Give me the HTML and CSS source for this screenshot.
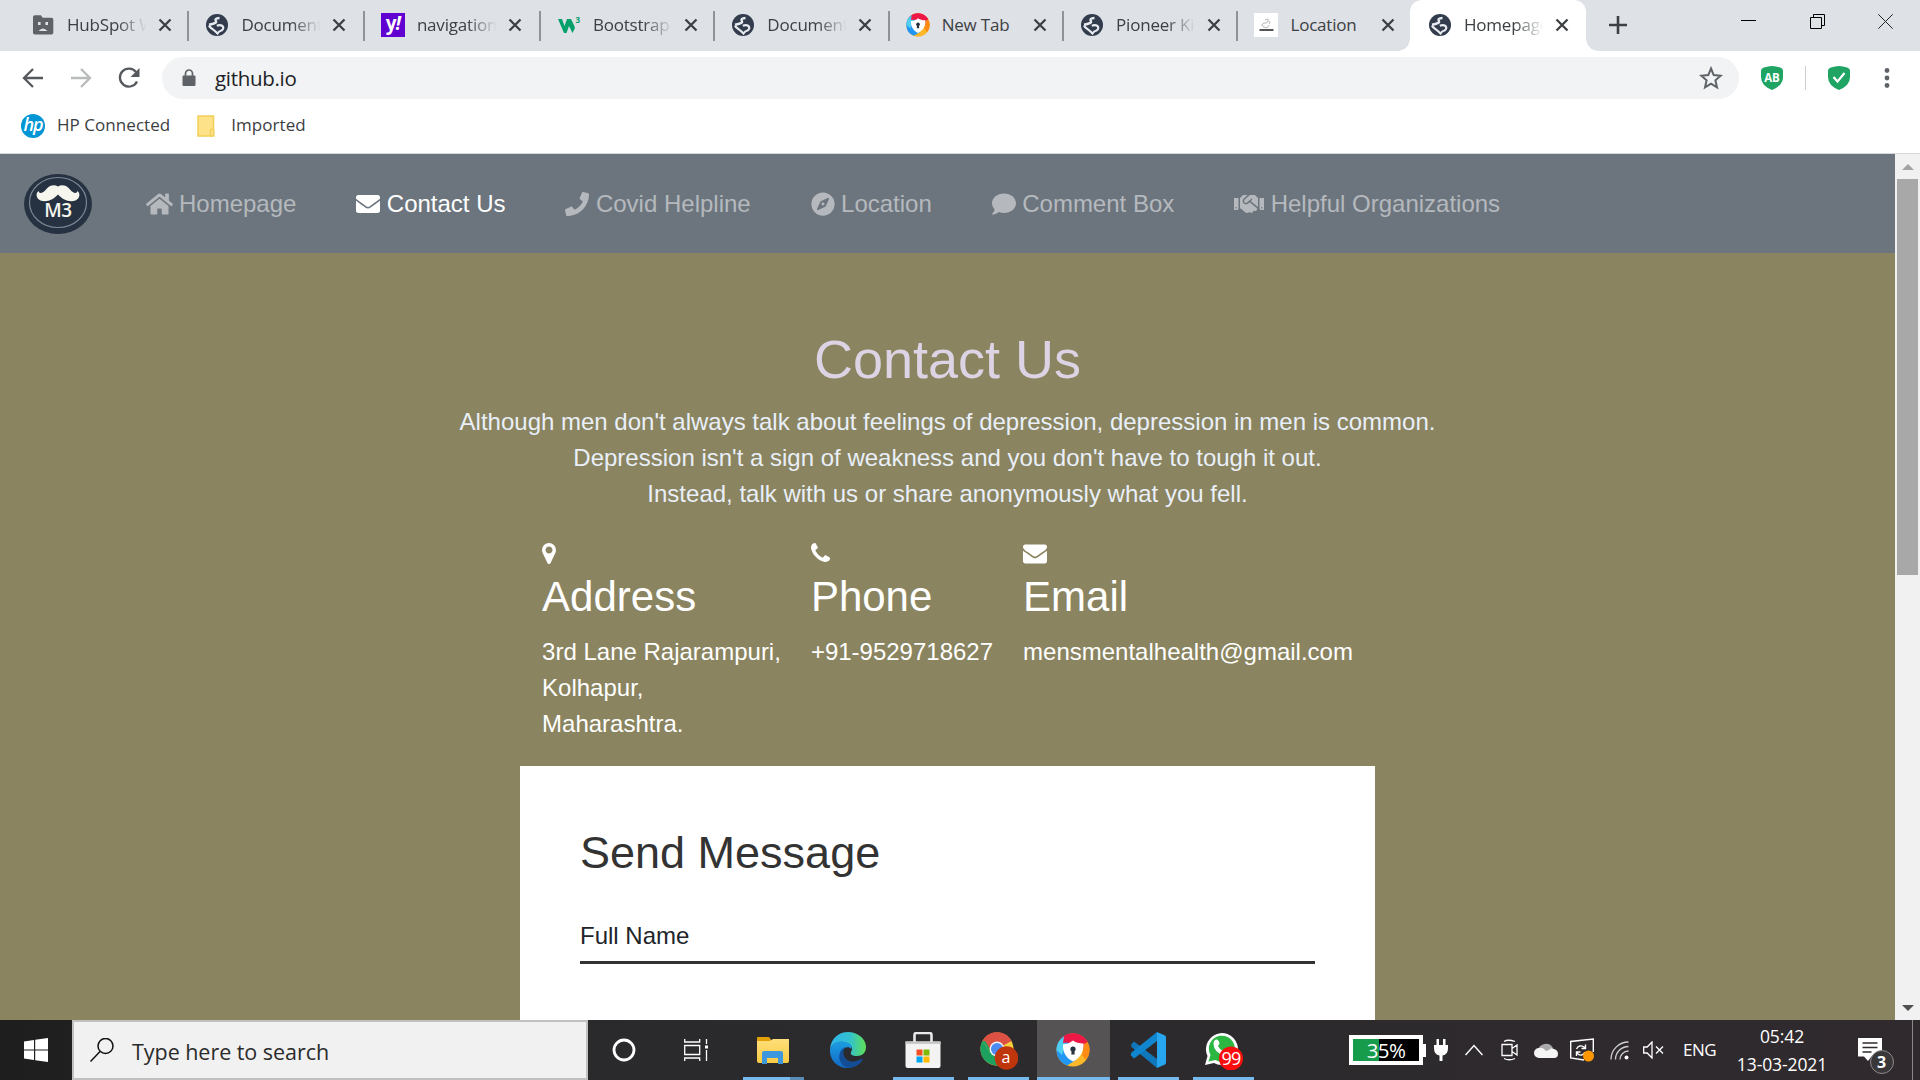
FILE: index.html
```html
<!DOCTYPE html>
<html lang="en">
<head>
<meta charset="utf-8">
<title>Homepage</title>
<link rel="stylesheet" href="styles.css">
</head>
<body>
<svg class="defs" width="0" height="0">
  <defs>
    <linearGradient id="edgeA" x1="0" y1="0" x2="1" y2="0"><stop offset="0" stop-color="#2fb4ee"/><stop offset=".55" stop-color="#33c1cf"/><stop offset="1" stop-color="#5fe055"/></linearGradient>
    <linearGradient id="edgeB" x1="0" y1="0" x2="0" y2="1"><stop offset="0" stop-color="#1b9de2"/><stop offset="1" stop-color="#1268c4"/></linearGradient>
    <linearGradient id="folder" x1="0" y1="0" x2="0" y2="1"><stop offset="0" stop-color="#ffdf7a"/><stop offset="1" stop-color="#f9cb45"/></linearGradient>
    <symbol id="close" viewBox="0 0 14 14"><path d="M1.500 1.500 12.500 12.500M12.500 1.500 1.500 12.500" stroke="#3c4043" stroke-width="2.300" fill="none"/></symbol>
    <symbol id="globe" viewBox="0 0 24 24"><circle cx="12" cy="12" r="11" fill="#323c4d"/><path d="M14.500 5C10.500 5 9.800 6.800 11 8.300 11.800 9.600 9 10.800 4 11.800" fill="none" stroke="#e8ecf1" stroke-width="2.400"/><path d="M4 12.500C5 15 8 16 10.500 18.500L12.500 20.500Q14 18 16.500 17.500 19.500 15.500 17.500 13 15 11.500 11.800 12.800" fill="none" stroke="#e8ecf1" stroke-width="2.200"/></symbol>
    <symbol id="avast" viewBox="0 0 34 34"><circle cx="17" cy="17" r="16.500" fill="#fdb829"/><path d="M17 17 3 8A16.500 16.500 0 0 1 31.500 9L28 16Z" fill="#ed1846"/><path d="M17 17 8 3.200A16.500 16.500 0 0 0 11 32.400L20 27Z" fill="#2196f3"/><path d="M8 3.500A16.500 16.500 0 0 0 .6 17L6 22 10 10Z" fill="#4fd0f2"/><path d="M8 3.500A16.500 16.500 0 0 1 31.500 9L29 13 17 9 7 10Z" fill="#ed1846"/><path d="M31.500 9A16.500 16.500 0 0 1 30 27L26 22 28 11Z" fill="#ff8a14"/><path d="M17 7.500C20 9.800 23 10.200 27.500 10.400 28 19 24 25 17 28.500 10 25 6.500 19 7 11.500 11 11 14 10 17 7.500Z" fill="#fff"/><circle cx="17" cy="16" r="2.600" fill="#26323e"/><path d="M15.800 16h2.400l.5 5.500h-3.400z" fill="#26323e"/></symbol>
  </defs>
</svg>

<header class="browser">
  <div class="tabstrip">
    <div class="tab"><svg class="fav" viewBox="0 0 24 24"><path d="M2 4q0-1.800 1.800-1.800h6l2 2.500h8.700q1.800 0 1.800 1.800v13.200q0 1.800-1.800 1.800H3.800Q2 21.500 2 19.700z" fill="#5f6368"/><path d="M7 9h2.600v3H7zM14.400 9H17v3h-2.600zM7.500 18q4.500-5 9 0" fill="#dee1e6"/></svg><span class="title">HubSpot W</span><svg class="x"><use href="#close"/></svg></div>
    <div class="tab t2"><svg class="fav"><use href="#globe"/></svg><span class="title">Document</span><svg class="x"><use href="#close"/></svg></div>
    <div class="tab t3"><span class="fav yahoo">y<i>!</i></span><span class="title">navigation</span><svg class="x"><use href="#close"/></svg></div>
    <div class="tab"><svg class="fav" viewBox="0 0 24 24"><path d="M1 6h4l2.500 7L10 6h4l3 6 1 3-2.500 5L12 13l-2.500 7H7z" fill="#04a06a"/><text class="w3sup" x="18.500" y="9.500">3</text></svg><span class="title">Bootstrap</span><svg class="x"><use href="#close"/></svg></div>
    <div class="tab"><svg class="fav"><use href="#globe"/></svg><span class="title">Document</span><svg class="x"><use href="#close"/></svg></div>
    <div class="tab"><svg class="fav"><use href="#avast"/></svg><span class="title full">New Tab</span><svg class="x"><use href="#close"/></svg></div>
    <div class="tab"><svg class="fav"><use href="#globe"/></svg><span class="title">Pioneer Ki</span><svg class="x"><use href="#close"/></svg></div>
    <div class="tab t8"><svg class="fav" viewBox="0 0 24 24"><path d="M0 0h24v24H0z" fill="#fff"/><path d="M11 7q4-2 3 1t-4 2q-4 2 0 4t5-2M15 8q2 2 0 3" fill="none" stroke="#aaa" stroke-width=".9"/><path d="M5.500 17h14" stroke="#555" stroke-width="2"/></svg><span class="title full">Location</span><svg class="x"><use href="#close"/></svg></div>
    <div class="tab active"><svg class="fav"><use href="#globe"/></svg><span class="title">Homepage</span><svg class="x"><use href="#close"/></svg></div>
    <svg class="plus" viewBox="0 0 18 18"><path d="M9 0v18M0 9h18" stroke="#3c4043" stroke-width="2.600"/></svg>
    <div class="winctl">
      <svg viewBox="0 0 15 15"><path d="M0 6.500h15" stroke="#000"/></svg>
      <svg viewBox="0 0 15 15"><path d="M.5 3.500h11v11H.5zM3.500 3.500v-3h11v11h-3" fill="none" stroke="#000"/></svg>
      <svg viewBox="0 0 15 15"><path d="M.3.300l14.400 14.400M14.700.300.300 14.700" stroke="#222"/></svg>
    </div>
  </div>
  <div class="toolbar">
    <svg class="tb" viewBox="0 0 24 24"><path d="M22 12H3.500M12 3l-9 9 9 9" fill="none" stroke="#55595e" stroke-width="2.300"/></svg>
    <svg class="tb" viewBox="0 0 24 24"><path d="M2 12h18.500M12 3l9 9-9 9" fill="none" stroke="#b9babc" stroke-width="2.300"/></svg>
    <svg class="tb" viewBox="0 0 24 24"><path d="M20 15.500A9 9 0 1 1 19 6" fill="none" stroke="#55595e" stroke-width="2.300"/><path d="M22.500 2v9h-9z" fill="#55595e"/></svg>
    <div class="omnibox">
      <svg class="lock" viewBox="0 0 14 18"><path d="M1.500 6.500h11q1 0 1 1v8.500q0 1-1 1h-11q-1 0-1-1V7.500q0-1 1-1z" fill="#5f6368"/><path d="M3.500 7V4.500a3.500 3.500 0 0 1 7 0V7" fill="none" stroke="#5f6368" stroke-width="1.700"/></svg>
      <span class="url">github.io</span>
      <svg class="star" viewBox="0 0 24 24"><path d="M12 2.500l2.700 6.600 7 .6-5.300 4.600 1.600 7L12 17.600l-6 3.700 1.600-7L2.300 9.700l7-.6z" fill="none" stroke="#5f6368" stroke-width="2"/></svg>
    </div>
    <svg class="shield" viewBox="0 0 22 24"><path d="M3 1.500Q11-1.500 19 1.500q3 1 3 3.500V11q0 8.500-11 13Q0 19.500 0 11V5q0-2.500 3-3.500z" fill="#1fa463"/><text class="ab" x="11" y="15.500">AB</text></svg>
    <span class="tbsep"></span>
    <svg class="shield" viewBox="0 0 22 24"><path d="M3 1.500Q11-1.500 19 1.500q3 1 3 3.500V11q0 8.500-11 13Q0 19.500 0 11V5q0-2.500 3-3.500z" fill="#1fa463"/><path d="M5.500 11l4 4.500L16.500 7" fill="none" stroke="#fff" stroke-width="2.200"/></svg>
    <svg class="dots" viewBox="0 0 6 20"><circle cx="3" cy="2.500" r="2.400"/><circle cx="3" cy="10" r="2.400"/><circle cx="3" cy="17.500" r="2.400"/></svg>
  </div>
  <div class="bookmarks">
    <span class="hp">hp</span><span>HP Connected</span>
    <svg class="fold" viewBox="0 0 18 22"><path d="M1 1h15.500v14.500H14V21H1z" fill="#fee28a" stroke="#f2cf57" stroke-width="1.500"/><path d="M13.500 21v-5q0-2 1.700-2t1.800 2v5z" fill="#fee28a" stroke="#f2cf57" stroke-width="1.300"/></svg><span>Imported</span>
  </div>
</header>

<div class="viewport">
  <main class="page">
    <nav class="navbar">
      <svg class="logo" viewBox="0 0 68 60" preserveAspectRatio="none"><ellipse cx="34" cy="30" rx="34" ry="30" fill="#263241"/><ellipse cx="34" cy="28.500" rx="28.500" ry="25" fill="none" stroke="#7c8793" stroke-width="1.200"/><path d="M34 12.500C38 10 43 11.500 46 15.500 49 19.500 53 20 53.500 17 56.500 19 56 24.500 51.500 26.500 45 29 38 25 34 20.500 30 25 23 29 16.500 26.500 12 24.500 11.500 19 14.500 17 15 20 19 19.500 22 15.500 25 11.500 30 10 34 12.500Z" fill="#f6f5ee"/><text class="m3" x="34" y="42.500">M3</text></svg>
      <a class="link"><svg class="i-home" viewBox="0 0 576 512"><path d="M280.370 148.260L96 300.110V464a16 16 0 0 0 16 16l112.060-.29a16 16 0 0 0 15.920-16V368a16 16 0 0 1 16-16h64a16 16 0 0 1 16 16v95.640a16 16 0 0 0 16 16.050L464 480a16 16 0 0 0 16-16V300L295.670 148.260a12.190 12.190 0 0 0-15.300 0zM571.600 251.470L488 182.560V44.050a12 12 0 0 0-12-12h-56a12 12 0 0 0-12 12v72.610L318.470 43a48 48 0 0 0-61 0L4.340 251.470a12 12 0 0 0-1.600 16.900l25.500 31A12 12 0 0 0 45.150 301l235.220-193.740a12.190 12.190 0 0 1 15.300 0L530.900 301a12 12 0 0 0 16.900-1.600l25.500-31a12 12 0 0 0-1.700-16.930z"/></svg>Homepage</a>
      <a class="link current"><svg class="i-sq" viewBox="0 0 512 512"><path d="M502.300 190.800c3.900-3.100 9.700-.2 9.700 4.700V400c0 26.500-21.500 48-48 48H48c-26.500 0-48-21.500-48-48V195.600c0-5 5.700-7.800 9.700-4.700 22.400 17.400 52.100 39.500 154.100 113.600 21.100 15.400 56.700 47.800 92.200 47.600 35.700.3 72-32.800 92.300-47.600 102-74.100 131.600-96.300 154-113.700zM256 320c23.200.4 56.600-29.200 73.400-41.400 132.700-96.300 142.800-104.700 173.400-128.700 5.800-4.500 9.200-11.500 9.200-18.900v-19c0-26.500-21.500-48-48-48H48c-26.500 0-48 21.500-48 48v19c0 7.400 3.400 14.300 9.200 18.900 30.600 23.900 40.700 32.400 173.400 128.700 16.800 12.200 50.200 41.800 73.400 41.400z"/></svg>Contact Us</a>
      <a class="link"><svg class="i-sq" viewBox="0 0 512 512"><path d="M493.400 24.600l-104-24c-11.300-2.600-22.900 3.300-27.500 13.900l-48 112c-4.200 9.800-1.400 21.300 6.900 28l60.600 49.600c-36 76.700-98.900 140.500-177.200 177.200l-49.600-60.600c-6.800-8.300-18.200-11.100-28-6.900l-112 48C3.900 366.500-2 378.100.6 389.400l24 104C27.100 504.200 36.700 512 48 512c256.100 0 464-207.500 464-464 0-11.200-7.700-20.900-18.600-23.400z"/></svg>Covid Helpline</a>
      <a class="link"><svg class="i-sq" viewBox="0 0 496 512"><path d="M225.380 233.370c-12.500 12.500-12.500 32.760 0 45.250 12.490 12.500 32.760 12.500 45.250 0 12.500-12.500 12.500-32.760 0-45.250-12.500-12.490-32.760-12.490-45.250 0zM248 8C111.030 8 0 119.030 0 256s111.030 248 248 248 248-111.030 248-248S384.970 8 248 8zm126.140 148.050L308.170 300.400a31.938 31.938 0 0 1-15.770 15.770l-144.340 65.970c-16.650 7.610-33.810-9.550-26.200-26.200l65.980-144.350a31.938 31.938 0 0 1 15.770-15.770l144.340-65.970c16.650-7.600 33.800 9.550 26.190 26.200z"/></svg>Location</a>
      <a class="link"><svg class="i-sq" viewBox="0 0 512 512"><path d="M256 32C114.600 32 0 125.100 0 240c0 49.600 21.400 95 57 130.700C44.500 421.100 2.700 466 2.200 466.500c-2.200 2.300-2.800 5.700-1.500 8.700S4.800 480 8 480c66.300 0 116-31.800 140.600-51.400 32.700 12.300 69 19.400 107.400 19.400 141.400 0 256-93.100 256-208S397.400 32 256 32z"/></svg>Comment Box</a>
      <a class="link"><svg class="i-hands" viewBox="0 0 640 512"><path d="M434.700 64h-85.900c-8 0-15.700 3-21.600 8.400l-98.300 90c-.1.1-.2.300-.3.400-16.600 15.600-16.300 40.500-2.100 56 12.700 13.900 39.400 17.600 56.100 2.700.1-.1.300-.1.400-.2l79.900-73.200c6.500-5.900 16.700-5.500 22.600 1 6 6.500 5.500 16.600-1 22.600l-26.100 23.900L504 313.800c2.900 2.400 5.500 5 7.900 7.700V128l-54.600-54.600c-5.900-6-14.100-9.400-22.600-9.400zM544 128.200v223.900c0 17.700 14.300 32 32 32h64V128.200h-96zm48 223.900c-8.800 0-16-7.200-16-16s7.200-16 16-16 16 7.200 16 16-7.200 16-16 16zM0 384h64c17.700 0 32-14.300 32-32V128.200H0V384zm48-63.900c8.800 0 16 7.200 16 16s-7.200 16-16 16-16-7.200-16-16c0-8.900 7.200-16 16-16zm435.900 18.600L334.600 217.500l-30 27.500c-29.700 27.100-75.200 24.500-101.700-4.400-26.900-29.400-24.800-74.900 4.400-101.700L289.100 64h-83.800c-8.500 0-16.600 3.400-22.600 9.400L128 128v223.900h18.300l90.500 81.900c27.400 22.300 67.700 18.100 90-9.300l.2-.2 17.900 15.500c15.900 13 39.400 10.500 52.300-5.400l31.400-38.600 5.400 4.400c13.700 11.100 33.900 9.100 45-4.700l9.500-11.700c11.200-13.800 9.100-33.900-4.600-45.100z"/></svg>Helpful Organizations</a>
    </nav>
    <section class="contact">
      <h2>Contact Us</h2>
      <p class="intro">Although men don't always talk about feelings of depression, depression in men is common.<br>Depression isn't a sign of weakness and you don't have to tough it out.<br>Instead, talk with us or share anonymously what you fell.</p>
      <div class="info">
        <div class="col">
          <svg class="c-pin" viewBox="384 128 1024 1536"><path d="M1152 640q0-106-75-181t-181-75-181 75-75 181 75 181 181 75 181-75 75-181zm256 0q0 109-33 179l-364 774q-16 33-47.500 52t-67.500 19-67.500-19-46.500-52l-365-774q-33-70-33-179 0-212 150-362t362-150 362 150 150 362z"/></svg>
          <h3>Address</h3>
          <p>3rd Lane Rajarampuri,<br>Kolhapur,<br>Maharashtra.</p>
        </div>
        <div class="col">
          <svg class="c-phone" viewBox="192 128 1408 1408"><path d="M1600 1240q0 27-10 70.500t-21 68.500q-21 50-122 106-94 51-186 51-27 0-53-3.500t-57.500-12.500-47-14.500-55.500-20.500-49-18q-98-35-175-83-127-79-264-216t-216-264q-48-77-83-175-3-9-18-49t-20.500-55.500-14.500-47-12.500-57.500-3.500-53q0-92 51-186 56-101 106-122 25-11 68.500-21t70.500-10q14 0 21 3 18 6 53 76 11 19 30 54t35 63.500 31 53.500q3 4 17.500 25t21.500 35.500 7 28.500q0 20-28.500 50t-62 55-62 53-28.500 46q0 9 5 22.500t8.500 20.500 14 24 11.500 19q76 137 174 235t235 174q2 1 19 11.500t24 14 20.500 8.500 22.500 5q18 0 46-28.500t53-62 55-62 50-28.500q14 0 28.500 7t35.500 21.500 25 17.500q25 15 53.500 31t63.500 35 54 30q70 35 76 53 3 7 3 21z"/></svg>
          <h3>Phone</h3>
          <p>+91-9529718627</p>
        </div>
        <div class="col">
          <svg class="c-mail" viewBox="0 256 1792 1408"><path d="M1792 710v794q0 66-47 113t-113 47h-1472q-66 0-113-47t-47-113v-794q44 49 101 87 362 246 497 345 57 42 92.500 65.500t94.500 48 110 24.500h2q51 0 110-24.500t94.500-48 92.500-65.500q170-123 498-345 57-39 100-87zm0-294q0 79-49 151t-122 123q-376 261-468 325-10 7-42.500 31t-54 38.500-52 32.500-57.500 27-50 9h-2q-23 0-50-9t-57.500-27-52-32.500-54-38.500-42.500-31q-91-64-262-182.500t-205-142.500q-62-42-117-115.500t-55-136.500q0-78 41.500-130t118.500-52h1472q65 0 112.500 47t47.500 113z"/></svg>
          <h3>Email</h3>
          <p>mensmentalhealth@gmail.com</p>
        </div>
      </div>
      <form class="card">
        <h2>Send Message</h2>
        <div class="field">Full Name</div>
      </form>
    </section>
  </main>
  <div class="scrollbar">
    <svg viewBox="0 0 12 6"><path d="M0 6l6-6 6 6z" fill="#a3a3a3"/></svg>
    <div class="thumb"></div>
    <svg class="down" viewBox="0 0 12 6"><path d="M0 0l6 6 6-6z" fill="#505050"/></svg>
  </div>
</div>

<footer class="taskbar">
  <div class="start"><svg viewBox="0 0 24 24"><path d="M0 3.400l10-1.400v9.400H0zM11.200 1.800 24 0v11.400H11.200zM0 12.600h10V22L0 20.600zM11.200 12.600H24V24l-12.800-1.800z" fill="#fff"/></svg></div>
  <div class="search"><svg viewBox="0 0 24 24"><circle cx="15.500" cy="8" r="7.500" fill="none" stroke="#111" stroke-width="1.500"/><path d="M10 13.500.5 23.500" stroke="#111" stroke-width="1.500"/></svg><span>Type here to search</span></div>
  <div class="sys"><svg viewBox="0 0 24 24"><circle cx="12" cy="12" r="10" fill="none" stroke="#fff" stroke-width="2.800"/></svg></div>
  <div class="sys"><svg viewBox="0 0 24 24"><path d="M.7 1v3h15V1M.7 23v-3h15v3M.7 7.500h15v9H.7zM22.500 1v5M22.500 12v11" fill="none" stroke="#fff" stroke-width="1.300"/><path d="M21 7.500h3v3h-3z" fill="#fff"/></svg></div>
  <div class="apps">
    <div class="app open split"><svg viewBox="0 0 36 36"><path d="M2 6q0-1 1-1h11l3 4H2z" fill="#e3a008"/><path d="M2 9h13l3-2h16v22q0 2-2 2H4q-2 0-2-2z" fill="url(#folder)"/><path d="M7 32V21q0-2 2-2h17q2 0 2 2v11h-5v-6H12v6z" fill="#3d97dc"/></svg></div>
    <div class="app"><svg viewBox="0 0 36 36"><path d="M0 17C1 6 9 0 18 0c10 0 18 7 18 15 0 6-4 9-9 9-4 0-7-1-6-4 2-3 1-6-2-8C13 8 4 9 0 17Z" fill="url(#edgeA)"/><path d="M0 17C3 9 13 8 18 11c4 2 4 4 3 6-2-3-8-2-9 4-1 7 5 14 10 15C9 38-1 29 0 17Z" fill="url(#edgeB)"/><path d="M15 15c-5 9 3 17 11 14 3 0 6-3 7-2-3 6-9 9-15 9C8 33 6 20 15 15Z" fill="#134d96"/></svg></div>
    <div class="app open"><svg viewBox="0 0 36 36"><path d="M9.500 12V3q0-2 2-2h13q2 0 2 2v9" fill="none" stroke="#e8e8e8" stroke-width="2.600"/><path d="M.5 9.500h35V34q0 2-2 2h-31q-2 0-2-2z" fill="#f3f3f3"/><path d="M.5 9.500h35V12H.5z" fill="#c9c9c9"/><path d="M11.500 17.500h6v6h-6z" fill="#f25022"/><path d="M18.500 17.500h6v6h-6z" fill="#7fba00"/><path d="M11.500 24.500h6v6h-6z" fill="#00a4ef"/><path d="M18.500 24.500h6v6h-6z" fill="#ffb900"/></svg></div>
    <div class="app open"><svg class="wide" viewBox="0 0 38 38"><circle cx="17" cy="17" r="16.500" fill="#f7cf3f"/><path d="M17 17 2.500 9A16.500 16.500 0 0 1 31.500 9Z" fill="#dd5144"/><path d="M2.500 9A16.500 16.500 0 0 0 17 33.500L22 22 10 20Z" fill="#1da15f"/><path d="M2.500 9 12 9 10 20Z" fill="#1da15f"/><path d="M4 7A16.500 16.500 0 0 1 31.500 9H17L10 17Z" fill="#dd5144"/><circle cx="17" cy="17" r="7.500" fill="#f1f1f1"/><circle cx="17" cy="17" r="6" fill="#4c8bf5"/><circle cx="26.500" cy="26" r="11.800" fill="#bf360c"/><text class="badge-a" x="26" y="31">a</text></svg></div>
    <div class="app open now"><svg class="av" viewBox="0 0 34 34"><use href="#avast"/></svg></div>
    <div class="app open"><svg viewBox="0 0 36 36"><path d="M1 12.500 4 9.500 27 27V36L1.500 15z" fill="#1177bb"/><path d="M1 23.500 4 26.500 27 9V0L1.500 20.500q-1 1.500-.5 3z" fill="#0f86cf"/><path d="M27 0l8 3.500q1 .5 1 2v25q0 1.500-1 2L27 36z" fill="#27a5ee"/></svg></div>
    <div class="app open"><svg class="wide" viewBox="0 0 38 38"><path d="M0 33l2.500-9A16 16 0 1 1 9 31z" fill="#fff"/><path d="M3.500 29.500l2-6.500A13 13 0 1 1 10.500 28z" fill="#2bb741"/><path d="M10 8q3-2 4.500 3 0 1-1.500 3 2 4 6.500 5.500l2-2q4 1 4 3-2 4-7 3Q9 20 8.500 12q0-3 1.500-4z" fill="#fff"/><circle cx="26" cy="26.500" r="12" fill="#f90d0d"/><text class="badge-n" x="26" y="32.500">99</text></svg></div>
  </div>
  <div class="tray">
    <div class="battery"><span>35%</span></div>
    <svg class="t-plug" viewBox="0 0 14 22"><path d="M2.500 0H5v6h4V0h2.500v6H14v3q0 7-5.500 7.500V22h-3v-5.500Q0 16 0 9V6h2.500z" fill="#fff"/></svg>
    <svg class="t-chev" viewBox="0 0 18 12"><path d="M.5 11 9 1.500l8.500 9.500" fill="none" stroke="#fff" stroke-width="1.500"/></svg>
    <svg class="t-cam" viewBox="0 0 18 22"><path d="M3 2.500Q7 0 14 2.500M3 19.500q5 2.500 11 0M1 5.500h10v11H1zM11 9.500l5-3.500v10l-5-3.500" fill="none" stroke="#fff" stroke-width="1.300"/></svg>
    <svg class="t-cloud" viewBox="0 0 24 16"><path d="M4 9a8 8 0 0 1 15-3l-4 4z" fill="#aaa"/><path d="M5 16a5 5 0 0 1 0-10q4-1 7 3l3-1q2-3 5-1 4 1 4 5 0 4-4 4z" fill="#f4f4f4"/></svg>
    <svg class="t-upd" viewBox="0 0 24 24"><path d="M14 22 .7 20V3.500L23.300 1v13" fill="none" stroke="#fff" stroke-width="1.400"/><path d="M6.500 11Q9 6 14 9l1.500 1.500M15.500 6.500v4h-4M15 14Q12 19 8 16l-1.500-2M6.500 18v-4h4" fill="none" stroke="#fff" stroke-width="1.400"/><circle cx="18.500" cy="18" r="5.500" fill="#ff9800"/></svg>
    <svg class="t-wifi" viewBox="0 0 20 19"><path d="M1 18.500A17.500 17.500 0 0 1 18.500 1M5.500 18.500a13 13 0 0 1 13-13M10 18.500a8.500 8.500 0 0 1 8.500-8.500" fill="none" stroke="#d0d0d0" stroke-width="1.300"/><circle cx="16.500" cy="16.500" r="2" fill="#fff"/></svg>
    <svg class="t-vol" viewBox="0 0 21 18"><path d="M.7 6h3.500L9 1v16l-4.800-5H.7zM13 5.500l7 7M20 5.500l-7 7" fill="none" stroke="#fff" stroke-width="1.300"/></svg>
    <span class="lang">ENG</span>
    <div class="clock"><span>05:42</span><span>13-03-2021</span></div>
    <svg class="t-note" viewBox="0 0 36 36"><path d="M0 0h24v18.500H13.500L10 23l-4-4.500H0z" fill="#fff"/><path d="M4.500 5h15M4.500 9.500h15M4.500 14h9" stroke="#2f2b2e" stroke-width="1.300"/><circle cx="24" cy="24" r="11.500" fill="#3a3739" stroke="#8c8a8b"/><text class="cnt" x="23.500" y="29.500">3</text></svg>
    <span class="desk"></span>
  </div>
</footer>
</body>
</html>
```
FILE: styles.css
```css
* { box-sizing: border-box; }
html, body { margin: 0; height: 100%; overflow: hidden; }
body { width: 1920px; height: 1080px; display: flex; flex-direction: column; font-family: "Liberation Sans", Arial, sans-serif; }
svg { display: block; flex: none; }
.defs { position: absolute; }

/* browser chrome */
.browser { height: 154px; flex: none; display: flex; flex-direction: column; background: #fff; border-bottom: 1px solid #d6d8db; font-family: "Open Sans", "Noto Sans", sans-serif; color: #3c4043; }
.tabstrip { height: 51px; display: flex; align-items: center; padding-left: 15px; background: #dee1e6; }
.tab { width: 174.400px; height: 30px; flex: none; display: flex; align-items: center; padding-left: 16px; border-right: 2px solid #8f9297; margin-bottom: 0; }
.tab.t2 { width: 175.500px; }
.tab.t3 { width: 176px; }
.tab.t8 { width: 171.500px; border-color: transparent; }
.fav { width: 24px; height: 24px; margin-right: 12px; margin-top: -1px; }
.title { width: 81px; font-size: 17px; letter-spacing: -.2px; line-height: 30px; margin-top: -2px; white-space: nowrap; overflow: hidden; -webkit-mask-image: linear-gradient(90deg, #000 62%, transparent 98%); mask-image: linear-gradient(90deg, #000 62%, transparent 98%); }
.title.full { -webkit-mask-image: none; mask-image: none; }
.x { width: 14px; height: 14px; margin-left: 10px; margin-top: -1px; }
.tab.active { width: 176px; height: 51px; margin: 0; border: 0; background: #fff; border-radius: 12px 12px 0 0; position: relative; padding-left: 18px; }
.tab.active::before, .tab.active::after { content: ""; position: absolute; bottom: 0; width: 12px; height: 12px; }
.tab.active::before { left: -12px; background: radial-gradient(circle at 0 0, #dee1e6 11.500px, #fff 12px); }
.tab.active::after { right: -12px; background: radial-gradient(circle at 100% 0, #dee1e6 11.500px, #fff 12px); }
.yahoo { background: #6001d2; color: #fff; font: bold 19px/21px "Open Sans", sans-serif; text-align: center; letter-spacing: -1px; }
.w3sup { font: bold 8px "Open Sans", sans-serif; fill: #04a06a; }
.plus { width: 18px; height: 18px; margin-left: 23px; margin-top: -1px; }
.winctl { display: flex; gap: 53.500px; margin-left: auto; padding-right: 27px; margin-top: -8px; }
.winctl svg { width: 15px; height: 15px; }
.toolbar { height: 53px; display: flex; align-items: center; padding-left: 21px; }
.tb { width: 24px; height: 24px; margin-right: 24px; }
.tb + .tb + .tb { margin-right: 21px; }
.omnibox { width: 1577px; height: 42px; border-radius: 21px; background: #f1f3f4; display: flex; align-items: center; padding-left: 20px; }
.lock { width: 14px; height: 18px; }
.url { margin-left: 19px; font-size: 20.500px; color: #202124; line-height: 38px; letter-spacing: -.3px; }
.star { width: 24px; height: 24px; margin-left: auto; margin-right: 16px; }
.shield { width: 22px; height: 24px; margin-left: 22px; }
.ab { font: bold 11.500px "Open Sans", sans-serif; fill: #fff; text-anchor: middle; }
.tbsep { width: 1px; height: 24px; margin-left: 22px; background: #ccced1; }
.dots { width: 6px; height: 20px; margin-left: 34px; fill: #5f6368; }
.bookmarks { display: flex; align-items: center; height: 44px; padding-left: 21px; font-size: 17px; line-height: 24px; letter-spacing: .05px; }
.bookmarks span:not(.hp) { margin-top: -2px; }
.hp { width: 24px; height: 24px; margin-right: 12px; border-radius: 50%; background: #0096d6; color: #fff; font: italic 600 18px/20px "Open Sans", sans-serif; text-align: center; letter-spacing: -1px; }
.fold { width: 18px; height: 22px; margin: 0 16px 0 27px; }

/* web page */
.viewport { height: 866px; flex: none; display: flex; overflow: hidden; }
.page { width: 1895px; background: #8a8460; overflow: hidden; }
.navbar { height: 99px; display: flex; align-items: center; padding-left: 24px; background: #6c757d; font-size: 24px; line-height: 36px; }
.logo { width: 68px; height: 60px; margin-right: 53.500px; margin-top: 1px; }
.m3 { font: 600 19px "Open Sans", sans-serif; fill: #f6f5ee; text-anchor: middle; letter-spacing: -.5px; }
.link { display: flex; align-items: center; white-space: nowrap; margin-right: 59.900px; color: #b5b9bd; }
.link svg { fill: currentColor; height: 24px; margin-right: 6.500px; }
.link.current { color: #fff; }
.i-home { width: 27px; }
.i-sq { width: 24px; }
.i-hands { width: 30px; }
.contact { padding-top: 74px; text-align: center; }
h2, h3, p { margin: 0; font-weight: 400; }
.contact > h2 { font-size: 54px; line-height: 65px; color: #dcd3e4; }
.intro { margin: 12px 0 24px; font-size: 24px; line-height: 36px; color: #e9eff8; }
.info { display: flex; justify-content: center; gap: 30px; color: #fff; text-align: left; font-size: 24px; line-height: 36px; height: 206px; }
.col { display: flex; flex-direction: column; white-space: nowrap; }
.col svg { fill: #fff; margin: 7px 0 8px; height: 21px; }
.col .c-phone { height: 19px; margin-bottom: 10px; width: 19px; }
.col .c-mail { height: 20px; margin: 8px 0; width: 24px; }
.c-pin { width: 14px; }
h3 { font-size: 42px; line-height: 50px; margin-bottom: 12px; }
.card { width: 855px; height: 400px; margin: 24px auto 0; padding: 60px; background: #fff; text-align: left; }
.card h2 { font-size: 45px; line-height: 54px; color: #333; }
.field { margin-top: 38px; height: 46px; border-bottom: 3px solid #333; font-size: 24px; line-height: 36px; color: #212529; }
.scrollbar { width: 25px; background: #f1f1f1; display: flex; flex-direction: column; align-items: center; padding: 10px 0 9px; }
.scrollbar svg { width: 12px; height: 6px; }
.thumb { width: 21px; height: 396px; margin-top: 9px; background: #a8a8a8; }
.scrollbar .down { margin-top: auto; }

/* taskbar */
.taskbar { height: 60px; flex: none; display: flex; background: linear-gradient(90deg, #1e1e1e, #2a2a2c 31%, #2c2a2c 60%, #302a2e); font-family: "Open Sans", "Noto Sans", sans-serif; color: #fff; }
.start { width: 72px; padding: 18px 24px; }
.start svg, .sys svg, .search svg { width: 24px; height: 24px; }
.search { width: 516px; border: 2px solid #c1c1c1; background: #f1f1f1; display: flex; padding: 16px 0 0 16px; color: #2b2b2b; font-size: 21.500px; line-height: 28px; letter-spacing: -.04px; white-space: nowrap; }
.search span { margin-left: 18px; }
.sys { width: 72px; padding: 18px 24px; }
.apps { display: flex; margin-left: 4px; }
.app { width: 75px; height: 60px; display: flex; flex-direction: column; align-items: center; padding-top: 12px; }
.app svg { width: 36px; height: 36px; margin-right: 2px; }
.app svg.wide { width: 38px; height: 38px; margin-right: 0; }
.app svg.av { width: 34px; height: 34px; margin-top: 1px; }
.app.open::after { content: ""; width: 61px; height: 3px; margin-top: auto; background: #76b9ed; }
.app.split::after { background: linear-gradient(90deg, #76b9ed 47px, #5a8db5 47px); }
.app.now { width: 73px; margin: 0 1px; background: #555354; }
.app.now::after { width: 73px; }
.badge-a { font: 16px "Open Sans", sans-serif; fill: #fff; text-anchor: middle; }
.badge-n { font: 18px "Open Sans", sans-serif; fill: #fff; text-anchor: middle; letter-spacing: -.7px; }
.tray { margin-left: auto; display: flex; align-items: center; }
.battery { width: 74px; height: 30px; border: 4px solid #fff; background: linear-gradient(90deg, #169c4b 40%, #000 40%); display: flex; justify-content: center; align-items: center; font-size: 20.500px; letter-spacing: -.7px; position: relative; }
.battery::after { content: ""; position: absolute; right: -7px; top: 5px; width: 3px; height: 13px; background: #fff; }
.t-plug { width: 14px; height: 22px; margin-left: 11px; }
.t-chev { width: 18px; height: 12px; margin-left: 17px; }
.t-cam { width: 18px; height: 22px; margin-left: 18px; }
.t-cloud { width: 24px; height: 16px; margin-left: 15px; }
.t-upd { width: 24px; height: 24px; margin-left: 12px; }
.t-wifi { width: 20px; height: 19px; margin-left: 16px; }
.t-vol { width: 21px; height: 18px; margin-left: 13px; }
.lang { width: 34px; margin-left: 19px; font-size: 17px; letter-spacing: -.5px; line-height: 30px; }
.clock { width: 94px; margin-left: 18px; display: flex; flex-direction: column; align-items: center; font-size: 17.500px; letter-spacing: -.1px; line-height: 28px; white-space: nowrap; }
.t-note { width: 36px; height: 36px; margin-left: 29px; margin-top: 12px; }
.cnt { font: bold 16px "Open Sans", sans-serif; fill: #fff; text-anchor: middle; }
.desk { width: 1px; height: 60px; margin: 0 7px 0 18px; background: #8b888a; }
```
